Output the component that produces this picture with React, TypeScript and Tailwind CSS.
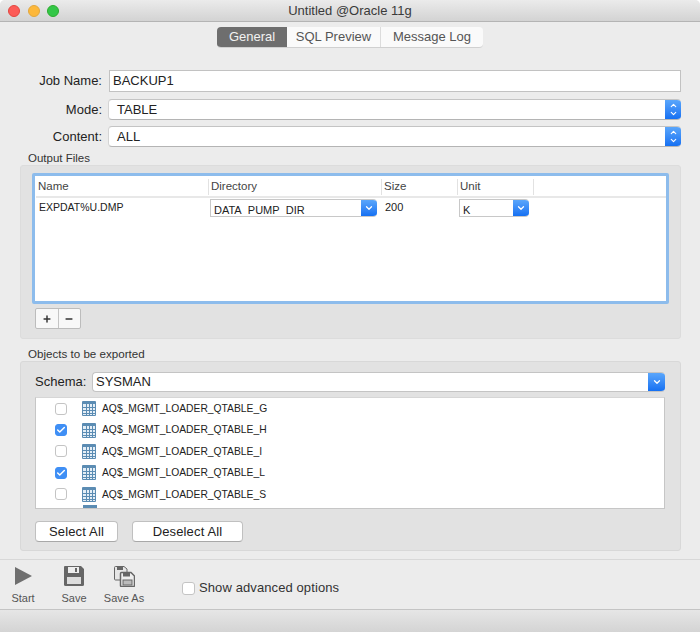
import { Check, ChevronDown, ChevronUp, Minus, Plus } from 'lucide-react';

const objects = [
  { name: 'AQ$_MGMT_LOADER_QTABLE_G', checked: false },
  { name: 'AQ$_MGMT_LOADER_QTABLE_H', checked: true },
  { name: 'AQ$_MGMT_LOADER_QTABLE_I', checked: false },
  { name: 'AQ$_MGMT_LOADER_QTABLE_L', checked: true },
  { name: 'AQ$_MGMT_LOADER_QTABLE_S', checked: false },
];

function TableIcon() {
  return (
    <svg width="14" height="15" viewBox="0 0 14 15" className="shrink-0">
      <rect x="0" y="0" width="14" height="15" rx="1" fill="#5b8cb3" />
      <rect x="1" y="3" width="12" height="11" fill="#e4eef6" />
      <path d="M0.5 6.5H13.5M0.5 9.5H13.5M0.5 12.5H13.5M4.5 3V14.5M7.5 3V14.5M10.5 3V14.5" stroke="#5b8cb3" strokeWidth="1" fill="none" />
    </svg>
  );
}

function UpDownSelect({ value }: { value: string }) {
  return (
    <div className="flex h-[21px] w-[573px] overflow-hidden rounded-[4px] border-t border-b border-l border-t-[#c4c4c4] border-b-[#b4b4b4] border-l-[#d4d4d4] bg-white">
      <span className="flex-1 pl-2 text-[13px] leading-[19px] text-[#222]">{value}</span>
      <span className="flex w-4 flex-col items-center justify-center bg-gradient-to-b from-[#5aa6fb] to-[#1470f2] text-white">
        <ChevronUp size={9} strokeWidth={3} className="-mb-[1px]" />
        <ChevronDown size={9} strokeWidth={3} />
      </span>
    </div>
  );
}

function CellSelect({ value, className }: { value: string; className: string }) {
  return (
    <div className={`flex h-[18px] overflow-hidden rounded-r-[4px] border-t border-b border-l border-[#c8c8c8] bg-white ${className}`}>
      <span className="flex-1 pt-[3px] pl-[3px]">
        <span className="block h-[12px] overflow-hidden text-[11px] leading-[14px] text-[#222]">{value}</span>
      </span>
      <span className="flex w-[16px] items-center justify-center bg-gradient-to-b from-[#5aa6fb] to-[#1470f2] text-white">
        <ChevronDown size={10} strokeWidth={3} />
      </span>
    </div>
  );
}

function Header({ label, className }: { label: string; className: string }) {
  return (
    <div className={`flex h-[16px] items-center border-r border-[#e2e2e2] pl-[2px] text-[11.500px] text-[#444] ${className}`}>{label}</div>
  );
}

function ToolButton({ label, className, children }: { label: string; className: string; children: React.ReactNode }) {
  return (
    <div className={`flex flex-col items-center ${className}`}>
      <div className="flex h-[24px] items-center justify-center">{children}</div>
      <span className="mt-[4px] text-[11px] leading-[13px] whitespace-nowrap text-[#555]">{label}</span>
    </div>
  );
}

export default function App() {
  return (
    <div className="flex h-[632px] w-[700px] flex-col overflow-hidden bg-white font-['Liberation_Sans',sans-serif]">
      <div className="flex h-[632px] flex-col overflow-hidden rounded-t-[5px] bg-[#ececec]">
        {/* Title bar */}
        <div className="relative flex h-[22px] shrink-0 items-center justify-center border-b border-[#b4b4b4] bg-gradient-to-b from-[#ebebeb] to-[#d3d3d3] text-[13px] text-[#3a3a3a]">
          <div className="absolute top-[5px] left-[8px] flex gap-[7.500px]">
            <span className="h-3 w-3 rounded-full border border-[#e2463f] bg-[#fc5b57]" />
            <span className="h-3 w-3 rounded-full border border-[#e1a73e] bg-[#fdb83b]" />
            <span className="h-3 w-3 rounded-full border border-[#2dac2f] bg-[#34c748]" />
          </div>
          Untitled @Oracle 11g
        </div>

        {/* Tabs */}
        <div className="mt-[5px] flex h-[21px] justify-center text-[13px]">
          <div className="flex overflow-hidden rounded-[4px] border-b border-[#d0d0d0] bg-[#fafafa] text-[#555]">
            <div className="flex w-[70px] items-center justify-center bg-[#6e6e6e] text-[#f2f2f2]">General</div>
            <div className="flex w-[94px] items-center justify-center border-r border-[#dcdcdc]">SQL Preview</div>
            <div className="flex w-[102px] items-center justify-center">Message Log</div>
          </div>
        </div>

        {/* Form */}
        <div className="mt-[22px] flex items-center">
          <label className="w-[102px] text-right text-[13px] text-[#222]">Job Name:</label>
          <div className="ml-[7px] flex h-[22px] w-[572px] items-center border border-[#c2c2c2] bg-white pl-[3px] text-[13px] text-[#222]">BACKUP1</div>
        </div>
        <div className="mt-[7px] flex items-center">
          <label className="w-[102px] text-right text-[13px] text-[#222]">Mode:</label>
          <div className="ml-[6px]"><UpDownSelect value="TABLE" /></div>
        </div>
        <div className="mt-[6px] flex items-center">
          <label className="w-[102px] text-right text-[13px] text-[#222]">Content:</label>
          <div className="ml-[6px]"><UpDownSelect value="ALL" /></div>
        </div>

        {/* Output files */}
        <div className="mt-[5px] ml-[28px] h-[13px] text-[11.500px] leading-[13px] text-[#333]">Output Files</div>
        <div className="ml-[20px] h-[174px] w-[661px] rounded-[3px] border border-[#dcdcdc] bg-[#e2e2e2] pt-[7px] pl-[11px]">
          <div className="h-[131px] w-[637px] rounded-[2px] border-[3px] border-[#8dbcec] bg-white pl-[1px]">
            <div className="flex h-[22px] items-start border-b-2 border-[#e8e8e8] pt-[3px]">
              <Header label="Name" className="w-[173px]" />
              <Header label="Directory" className="w-[173px]" />
              <Header label="Size" className="w-[76px]" />
              <Header label="Unit" className="w-[76px]" />
            </div>
            <div className="flex items-start pt-[1px]">
              <div className="w-[174px] pt-[1px] pl-[3px] text-[10.500px] leading-[14px] text-[#222]">EXPDAT%U.DMP</div>
              <CellSelect value="DATA_PUMP_DIR" className="w-[167px]" />
              <div className="ml-[8px] w-[74px] pt-[1px] text-[11px] leading-[14px] text-[#222]">200</div>
              <CellSelect value="K" className="w-[70px]" />
            </div>
          </div>
          <div className="mt-[4px] ml-[3px] flex h-[21px] w-[46px] rounded-[2px] border border-[#bcbcbc] bg-[#f8f8f8] text-[#333]">
            <span className="flex flex-1 items-center justify-center border-r border-[#c4c4c4]"><Plus size={10} strokeWidth={3.5} /></span>
            <span className="flex flex-1 items-center justify-center"><Minus size={10} strokeWidth={3.5} /></span>
          </div>
        </div>

        {/* Objects */}
        <div className="mt-[8px] mb-[1px] ml-[28px] h-[13px] text-[11.600px] leading-[13px] text-[#333]">Objects to be exported</div>
        <div className="ml-[20px] h-[190px] w-[661px] rounded-[3px] border border-[#d8d8d8] bg-[#e2e2e2] pt-[10px] pl-[14px]">
          <div className="flex items-center">
            <label className="w-[52px] text-[13px] text-[#222]">Schema:</label>
            <div className="ml-[5px] flex h-[20px] w-[573px] overflow-hidden rounded-[4px] border-t border-b border-l border-[#c4c4c4] bg-white">
              <span className="flex-1 pl-[3px] text-[13px] leading-[18px] text-[#222]">SYSMAN</span>
              <span className="flex w-[17px] items-center justify-center bg-gradient-to-b from-[#5aa6fb] to-[#1470f2] text-white">
                <ChevronDown size={10} strokeWidth={3} />
              </span>
            </div>
          </div>
          <div className="mt-[5px] h-[112px] w-[630px] overflow-hidden border border-[#c6c6c6] border-t-[#d6d6d6] bg-white">
            {objects.map((o) => (
              <div key={o.name} className="flex h-[21.4px] items-center">
                <span className={`ml-[19px] flex h-3 w-3 items-center justify-center rounded-[3px] border ${o.checked ? 'border-[#3f8ff5] bg-[#3f8ff5] text-white' : 'border-[#c4c4c4] bg-white'}`}>
                  {o.checked && <Check size={10} strokeWidth={3.5} />}
                </span>
                <span className="ml-[15px]"><TableIcon /></span>
                <span className="ml-[6px] text-[10.300px] text-[#222]">{o.name}</span>
              </div>
            ))}
            <div className="ml-[47px] h-[3px] w-[14px] bg-[#5b8cb3]" />
          </div>
          <div className="mt-[12px] flex gap-[14px] text-[13px] tracking-[0.15px] text-[#222]">
            <div className="flex h-[21px] w-[83px] items-center justify-center rounded-[4px] border border-[#c0c0c0] border-b-[#a8a8a8] bg-white">Select All</div>
            <div className="flex h-[21px] w-[111px] items-center justify-center rounded-[4px] border border-[#c0c0c0] border-b-[#a8a8a8] bg-white">Deselect All</div>
          </div>
        </div>

        {/* Toolbar */}
        <div className="mt-[8px] flex h-[50px] shrink-0 border-t border-[#d8d8d8] pt-[4px]">
          <ToolButton label="Start" className="ml-[11px] w-[24px]">
            <svg width="20" height="20" viewBox="0 0 20 20"><path d="M2 1L19 10L2 19Z" fill="#6f6f6f" /></svg>
          </ToolButton>
          <ToolButton label="Save" className="ml-[27px] w-[24px]">
            <svg width="20" height="20" viewBox="0 0 20 20">
              <path d="M1 0H17L20 3V18.500Q20 20 18.500 20H1.500Q0 20 0 18.500V1Q0 0 1 0Z" fill="#666" />
              <rect x="4" y="1" width="11" height="6" fill="#eee" />
              <rect x="11" y="2" width="2" height="4" fill="#666" />
              <rect x="3" y="11" width="14" height="7" fill="#ddd" />
            </svg>
          </ToolButton>
          <ToolButton label="Save As" className="ml-[18px] w-[40px]">
            <svg width="21" height="21" viewBox="0 0 21 21">
              <path d="M0.500 1.500Q0.500 0.500 1.500 0.500H10L13 3V14H1.500Q0.500 14 0.500 13Z" fill="#e6e6e6" stroke="#666" />
              <rect x="3" y="1" width="6" height="3" fill="#666" />
              <path d="M6.500 7.500Q6.500 6.500 7.500 6.500H17L20.500 10V19.500Q20.500 20.500 19.500 20.500H7.500Q6.500 20.500 6.500 19.500Z" fill="#eee" stroke="#666" strokeWidth="1.500" />
              <rect x="9" y="7" width="7" height="3.500" fill="#666" />
              <rect x="9" y="14" width="9" height="5" fill="#bbb" stroke="#666" />
            </svg>
          </ToolButton>
          <div className="ml-[38px] flex h-[48px] items-center">
            <span className="h-[13px] w-[13px] rounded-[3px] border border-[#c4c4c4] bg-white" />
            <span className="ml-[4px] text-[13px] tracking-[0.1px] text-[#333]">Show advanced options</span>
          </div>
        </div>

        {/* Status bar */}
        <div className="flex-1 border-t border-[#c4c4c4] bg-gradient-to-b from-[#e6e6e6] to-[#d4d4d4]" />
      </div>
    </div>
  );
}
